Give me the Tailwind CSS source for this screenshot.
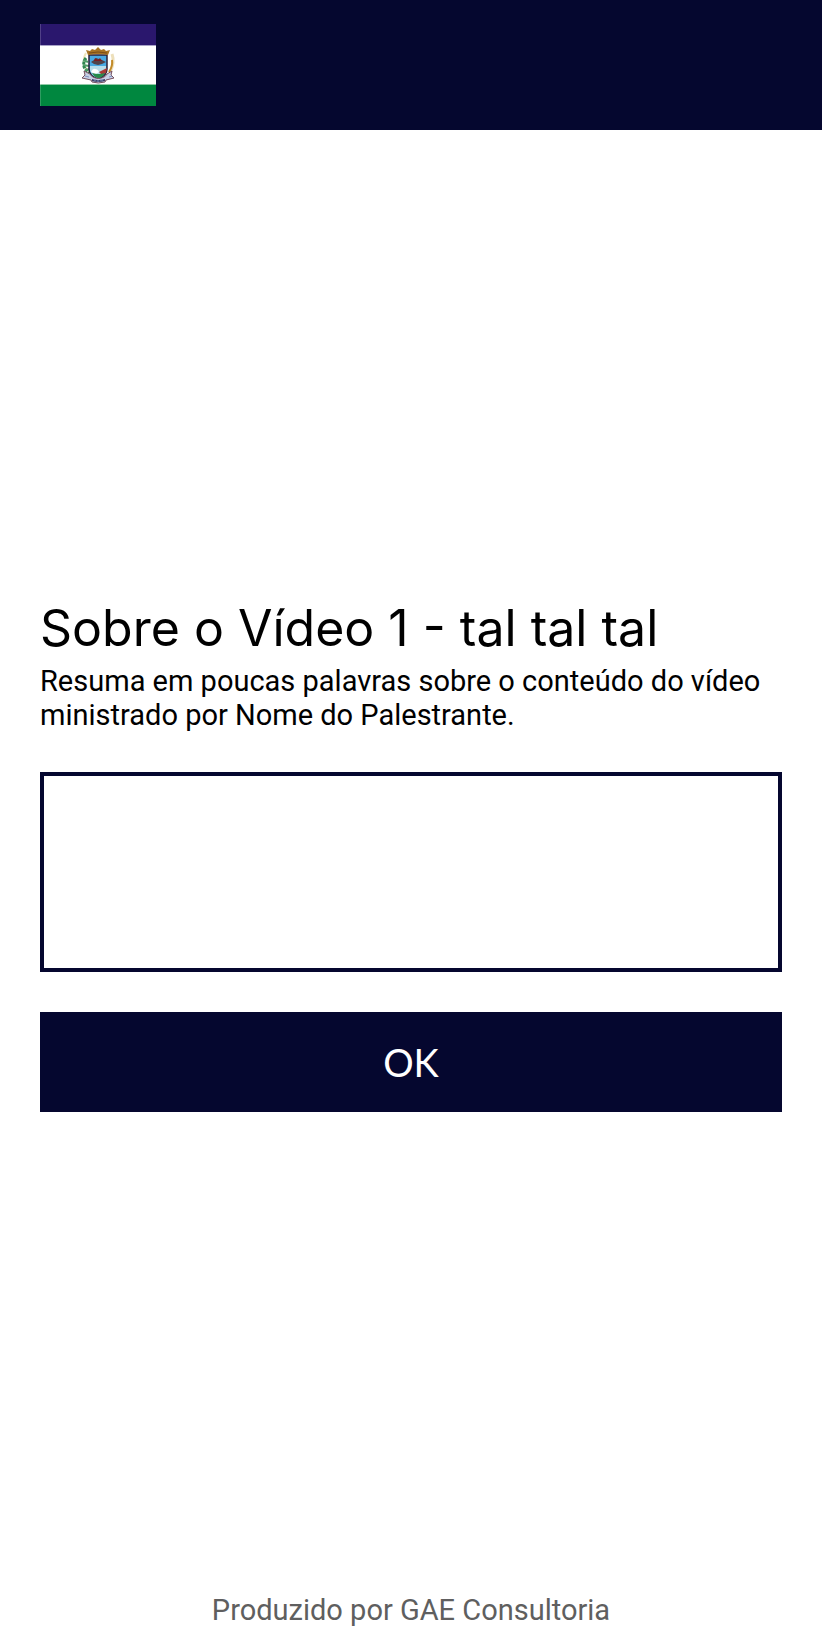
<!DOCTYPE html>
<html lang="pt-BR">
<head>
<meta charset="utf-8">
<meta name="viewport" content="width=device-width, initial-scale=1">
<title>Sobre o Vídeo 1</title>
<script src="https://cdn.jsdelivr.net/npm/@tailwindcss/browser@4"></script>
</head>
<body class="flex min-h-screen flex-col bg-white font-[Roboto,sans-serif] text-black">
<header class="bg-[#05072f] px-10 py-6">
  <svg class="block h-[82px] w-[116px]" viewBox="0 0 116 82" role="img" aria-label="Bandeira do município">
    <path fill="#fff" d="M0 0h116v82H0z"/>
    <path fill="#2a176d" d="M0 0h116v21H0z"/>
    <path fill="#a9a3c8" d="M0 21h116v1H0z"/>
    <path fill="#8fcaa6" d="M0 60h116v1H0z"/>
    <path fill="#00873f" d="M0 61h116v21H0z"/>
    <path fill="#fff" fill-opacity=".18" d="M0 0h1v82H0z"/>
    <!-- ramos laterais -->
    <path d="M46 29c-3 4-3 13 2 18" fill="none" stroke="#efe6bd" stroke-width="2"/>
    <path d="M46 34q-4 5-1 11l4 4" fill="none" stroke="#2f8650" stroke-width="3" stroke-dasharray="3 1"/>
    <path d="M43 36l5 2M43 41l6 1M45 46l5-1" stroke="#4f9c68" stroke-width="2"/>
    <path d="M72 30q3 8-2 18" fill="none" stroke="#eddfba" stroke-width="3"/>
    <path d="M72 36q1 6-3 12" fill="none" stroke="#c28a28" stroke-width="2"/>
    <!-- escudo -->
    <path d="M49 31h18v14q0 7-9 10Q49 52 49 45z" fill="#48a9e3" stroke="#2b2038" stroke-width="1.500"/>
    <path d="M50 42h16v4q-2 5-8 8Q51 51 50 46z" fill="#b9ddeb"/>
    <path d="M51 38l3-2 2-2 3 1 3 1 4 2-4 2-4 1-4-1z" fill="#51434b"/>
    <path d="M54 37l1-3 3 2 2-2 2 3z" fill="#7b1c20"/>
    <path d="M51 48q2-4 4-3 3 0 4 3l-3 2z" fill="#fff"/>
    <path d="M59 48l4-2 4-2-1 5-4 2z" fill="#a93a35"/>
    <path d="M52 49q6 2 13 0-2 4-6.500 5.500Q54 53 52 49z" fill="#278b4b"/>
    <!-- coroa -->
    <path d="M48 31l-2-5 4 1 2-2 3 1 3-3 3 3 3-1 2 2 4-1-2 5q-10-2-20 0z" fill="#a87424"/>
    <path d="M49 29q9-2 18 0" fill="none" stroke="#7a4c18" stroke-width="1"/>
    <!-- faixa -->
    <path d="M44 47l6 3q2 4 8.500 4.500Q65 54 67 50l5-3-1 4 3 3-8 2-1 2q-7 2-13 0l-1-2-9-2 3-3z" fill="#c7cfe5" stroke="#76505f" stroke-width="1"/>
    <path d="M52 55q6 2 13 0v2q-7 2-13 0z" fill="#3f416a"/>
    <path d="M54 56h2m1 1h2m1-1h3M45 52l4 1m20 0l3-1" stroke="#8194c3" stroke-width="1"/>
  </svg>
</header>
<main class="flex flex-1 flex-col justify-center px-10">
  <form class="flex flex-col gap-10">
    <div>
      <h1 class="font-[Inter,sans-serif] text-[50px] leading-[72px]">Sobre o Vídeo 1 - tal tal tal</h1>
      <label for="resumo" class="block text-[29px] leading-[34px]">Resuma em poucas palavras sobre o conteúdo do vídeo ministrado por Nome do Palestrante.</label>
    </div>
    <textarea id="resumo" class="block h-[200px] w-full resize-none border-4 border-[#05072f] bg-white p-4 text-[29px] leading-[34px] outline-none"></textarea>
    <button type="button" class="h-[100px] w-full bg-[#05072f] font-[Lato,sans-serif] text-[38px] text-white">OK</button>
  </form>
</main>
<footer class="py-[19px] text-center text-[29px] leading-[34px] text-[#5f5f5f]">Produzido por GAE Consultoria</footer>
</body>
</html>
